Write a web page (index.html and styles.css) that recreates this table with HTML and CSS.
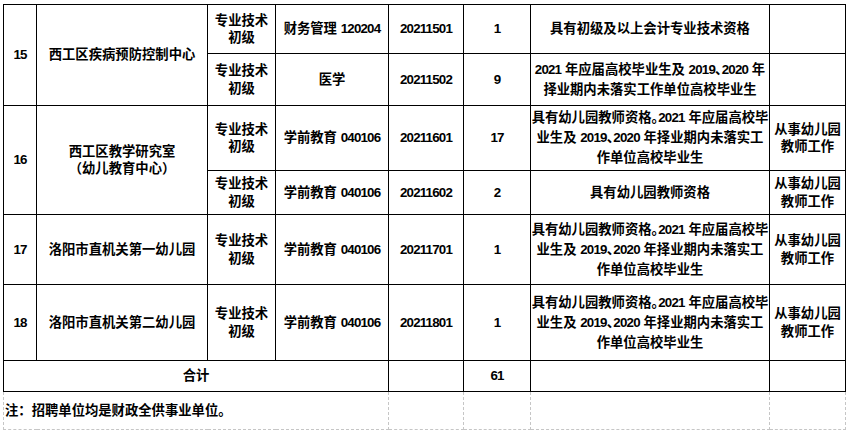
FILE: index.html
```html
<!DOCTYPE html>
<html lang="zh-CN">
<head>
<meta charset="utf-8">
<title>招聘岗位表</title>
<link rel="stylesheet" href="styles.css">
</head>
<body>
<table class="grid">
  <colgroup>
    <col class="c-no"><col class="c-unit"><col class="c-type"><col class="c-major"><col class="c-code"><col class="c-num"><col class="c-req"><col class="c-note">
  </colgroup>
  <tbody>
    <tr class="r-15a">
      <td rowspan="2" class="d">15</td>
      <td rowspan="2">西工区疾病预防控制中心</td>
      <td class="tight">专业技术<br>初级</td>
      <td>财务管理 <span class="d">120204</span></td>
      <td class="d">20211501</td>
      <td class="d">1</td>
      <td class="req">具有初级及以上会计专业技术资格</td>
      <td></td>
    </tr>
    <tr class="r-15b">
      <td class="tight">专业技术<br>初级</td>
      <td>医学</td>
      <td class="d">20211502</td>
      <td class="d">9</td>
      <td class="req"><span class="d">2021</span> 年应届高校毕业生及 <span class="d">2019</span><span class="p">、</span><span class="d">2020</span> 年<br>择业期内未落实工作单位高校毕业生</td>
      <td></td>
    </tr>
    <tr class="r-16a">
      <td rowspan="2" class="d">16</td>
      <td rowspan="2" class="tight">西工区教学研究室<br>（幼儿教育中心）</td>
      <td class="tight">专业技术<br>初级</td>
      <td>学前教育 <span class="d">040106</span></td>
      <td class="d">20211601</td>
      <td class="d">17</td>
      <td class="req">具有幼儿园教师资格<span class="p">。</span><span class="d">2021</span> 年应届高校毕<br>业生及 <span class="d">2019</span><span class="p">、</span><span class="d">2020</span> 年择业期内未落实工<br>作单位高校毕业生</td>
      <td class="tight">从事幼儿园<br>教师工作</td>
    </tr>
    <tr class="r-16b">
      <td class="tight">专业技术<br>初级</td>
      <td>学前教育 <span class="d">040106</span></td>
      <td class="d">20211602</td>
      <td class="d">2</td>
      <td class="req">具有幼儿园教师资格</td>
      <td class="tight">从事幼儿园<br>教师工作</td>
    </tr>
    <tr class="r-17">
      <td class="d">17</td>
      <td>洛阳市直机关第一幼儿园</td>
      <td class="tight">专业技术<br>初级</td>
      <td>学前教育 <span class="d">040106</span></td>
      <td class="d">20211701</td>
      <td class="d">1</td>
      <td class="req">具有幼儿园教师资格<span class="p">。</span><span class="d">2021</span> 年应届高校毕<br>业生及 <span class="d">2019</span><span class="p">、</span><span class="d">2020</span> 年择业期内未落实工<br>作单位高校毕业生</td>
      <td class="tight">从事幼儿园<br>教师工作</td>
    </tr>
    <tr class="r-18">
      <td class="d">18</td>
      <td>洛阳市直机关第二幼儿园</td>
      <td class="tight">专业技术<br>初级</td>
      <td>学前教育 <span class="d">040106</span></td>
      <td class="d">20211801</td>
      <td class="d">1</td>
      <td class="req">具有幼儿园教师资格<span class="p">。</span><span class="d">2021</span> 年应届高校毕<br>业生及 <span class="d">2019</span><span class="p">、</span><span class="d">2020</span> 年择业期内未落实工<br>作单位高校毕业生</td>
      <td class="tight">从事幼儿园<br>教师工作</td>
    </tr>
    <tr class="r-total">
      <td colspan="4">合计</td>
      <td></td>
      <td class="d">61</td>
      <td></td>
      <td></td>
    </tr>
    <tr class="r-foot">
      <td colspan="4" class="foot-note">注：招聘单位均是财政全供事业单位<span class="p">。</span></td>
      <td></td>
      <td></td>
      <td></td>
      <td></td>
    </tr>
  </tbody>
</table>
</body>
</html>
```
FILE: styles.css
```css
html, body {
  margin: 0;
  padding: 0;
  background: #ffffff;
}

body {
  padding: 4px 0 0 3px;
  font-family: "Liberation Sans", "Noto Sans CJK SC", sans-serif;
  font-weight: bold;
  font-size: 13.33px;
  color: #000000;
}

.grid {
  border-collapse: collapse;
  table-layout: fixed;
  width: 842px;
}

.c-no { width: 33px; }
.c-unit { width: 171px; }
.c-type { width: 68px; }
.c-major { width: 113px; }
.c-code { width: 75px; }
.c-num { width: 67px; }
.c-req { width: 239px; }
.c-note { width: 76px; }

.grid td {
  border: 1px solid #000000;
  padding: 0;
  text-align: center;
  vertical-align: middle;
  line-height: 18px;
  white-space: nowrap;
  overflow: visible;
}

.grid td.tight {
  line-height: 17.5px;
}

.grid td.req {
  line-height: 20px;
}

.d {
  letter-spacing: -0.8px;
}

.p {
  font-feature-settings: "halt" 1;
}

.r-15a { height: 49px; }
.r-15b { height: 52px; }
.r-16a { height: 65px; }
.r-16b { height: 44px; }
.r-17 { height: 70px; }
.r-18 { height: 76px; }
.r-total { height: 31px; }
.r-foot { height: 38px; }

.grid .r-foot td {
  border: 1px dashed #c6c6c6;
}

.grid td.foot-note {
  text-align: left;
  padding-left: 1px;
}
```
